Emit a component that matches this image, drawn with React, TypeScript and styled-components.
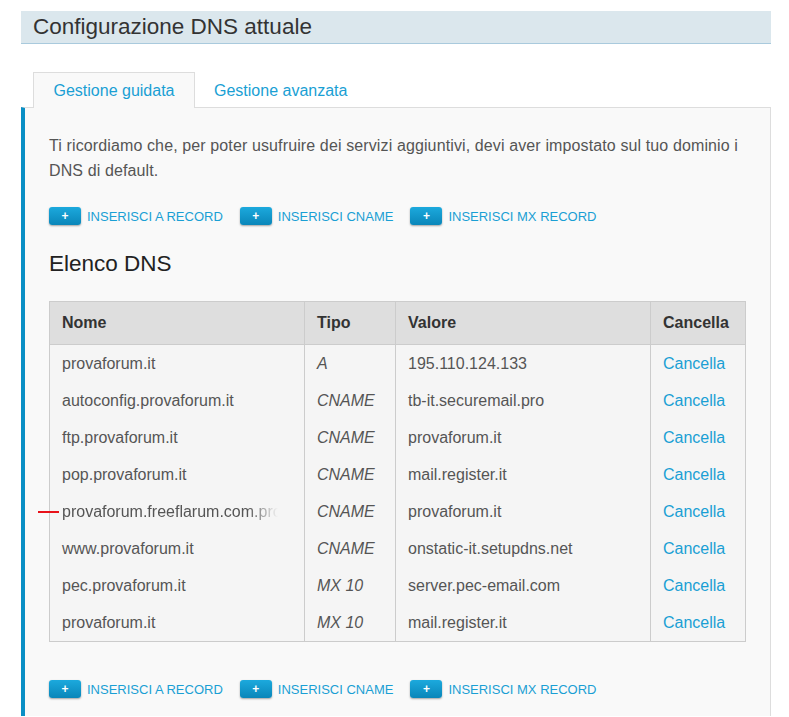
import React from "react";
import styled, { createGlobalStyle } from "styled-components";

const GlobalStyle = createGlobalStyle`
  body {
    margin: 0;
    background: #fff;
    font-family: "Liberation Sans", Arial, sans-serif;
  }
`;

const Page = styled.div`
  width: 750px;
  padding: 11px 0 0 21px;
`;

const TitleBar = styled.div`
  height: 32px;
  line-height: 32px;
  padding-left: 12px;
  background: #dbe7ed;
  border-bottom: 1px solid #a9cadd;
  font-size: 22.5px;
  color: #333;
`;

const Tabs = styled.div`
  display: flex;
  margin-top: 28px;
  padding-left: 12px;
  position: relative;
  z-index: 1;
`;

const Tab = styled.div<{ $active?: boolean }>`
  height: 35px;
  line-height: 35px;
  padding: 0 18px;
  width: ${(p) => (p.$active ? "124px" : "auto")};
  text-align: center;
  font-size: 16px;
  color: #1a9fd4;
  background: ${(p) => (p.$active ? "#f9f9f9" : "transparent")};
  border: 1px solid ${(p) => (p.$active ? "#ddd" : "transparent")};
  border-bottom: none;
  box-sizing: content-box;
  margin-bottom: -1px;
`;

const Panel = styled.div`
  background: #f9f9f9;
  border-left: 4px solid #0a8fc5;
  border-right: 1px solid #ddd;
  border-top: 1px solid #ddd;
  padding: 25px 24px 18px;
`;

const Intro = styled.p`
  margin: 0;
  font-size: 16px;
  line-height: 25px;
  letter-spacing: 0.12px;
  color: #555;
`;

const Actions = styled.div<{ $top: number }>`
  display: flex;
  gap: 17px;
  margin-top: ${(p) => p.$top}px;
`;

const Action = styled.div`
  display: flex;
  align-items: center;
  gap: 6px;
  font-size: 13px;
  color: #1a9fd4;
  text-transform: uppercase;
`;

const PlusButton = styled.span`
  width: 32px;
  height: 18px;
  border-radius: 3px;
  background: linear-gradient(#1ca9dd, #0a86b9);
  box-shadow: 0 1px 2px rgba(0, 0, 0, 0.35);
  color: #fff;
  font-weight: bold;
  font-size: 12px;
  line-height: 18px;
  text-align: center;
`;

const Heading = styled.h2`
  margin: 24px 0 22px;
  font-size: 22.5px;
  font-weight: normal;
  line-height: 30px;
  color: #222;
`;

const Table = styled.table`
  width: 696px;
  border-collapse: collapse;
  border: 1px solid #ccc;
  font-size: 16px;
  color: #555;
  table-layout: fixed;
`;

const Th = styled.th<{ $w: number }>`
  box-sizing: border-box;
  width: ${(p) => p.$w}px;
  height: 43px;
  padding: 0 12px;
  text-align: left;
  background: #dedede;
  color: #333;
  border-left: 1px solid #ccc;
  border-bottom: 1px solid #ccc;
`;

const Td = styled.td<{ $italic?: boolean }>`
  height: 37px;
  padding: 0 12px;
  background: #f5f5f5;
  border-left: 1px solid #ccc;
  font-style: ${(p) => (p.$italic ? "italic" : "normal")};
  white-space: nowrap;
  position: relative;
`;

const Faded = styled.span`
  display: inline-block;
  vertical-align: top;
  max-width: 216px;
  overflow: hidden;
  -webkit-mask-image: linear-gradient(to right, #000 86%, transparent);
  mask-image: linear-gradient(to right, #000 86%, transparent);
`;

const Marker = styled.span`
  position: absolute;
  left: -12px;
  top: 50%;
  width: 21px;
  height: 2px;
  margin-top: -1px;
  background: #e8121a;
`;

const DeleteLink = styled.a`
  color: #1a9fd4;
  text-decoration: none;
`;

const records = [
  { name: "provaforum.it", type: "A", value: "195.110.124.133" },
  { name: "autoconfig.provaforum.it", type: "CNAME", value: "tb-it.securemail.pro" },
  { name: "ftp.provaforum.it", type: "CNAME", value: "provaforum.it" },
  { name: "pop.provaforum.it", type: "CNAME", value: "mail.register.it" },
  { name: "provaforum.freeflarum.com.provaforum.it", type: "CNAME", value: "provaforum.it", marked: true },
  { name: "www.provaforum.it", type: "CNAME", value: "onstatic-it.setupdns.net" },
  { name: "pec.provaforum.it", type: "MX 10", value: "server.pec-email.com" },
  { name: "provaforum.it", type: "MX 10", value: "mail.register.it" },
];

const ActionRow = ({ top }: { top: number }) => (
  <Actions $top={top}>
    {["Inserisci A record", "Inserisci CNAME", "Inserisci MX record"].map((label) => (
      <Action key={label}>
        <PlusButton>+</PlusButton>
        {label}
      </Action>
    ))}
  </Actions>
);

export default function App() {
  return (
    <>
      <GlobalStyle />
      <Page>
        <TitleBar>Configurazione DNS attuale</TitleBar>
        <Tabs>
          <Tab $active>Gestione guidata</Tab>
          <Tab>Gestione avanzata</Tab>
        </Tabs>
        <Panel>
          <Intro>
            Ti ricordiamo che, per poter usufruire dei servizi aggiuntivi, devi aver impostato sul tuo dominio i
            DNS di default.
          </Intro>
          <ActionRow top={24} />
          <Heading>Elenco DNS</Heading>
          <Table>
            <thead>
              <tr>
                <Th $w={255}>Nome</Th>
                <Th $w={91}>Tipo</Th>
                <Th $w={255}>Valore</Th>
                <Th $w={95}>Cancella</Th>
              </tr>
            </thead>
            <tbody>
              {records.map((r, i) => (
                <tr key={i}>
                  <Td>
                    {r.marked && <Marker />}
                    {r.marked ? <Faded>{r.name}</Faded> : r.name}
                  </Td>
                  <Td $italic>{r.type}</Td>
                  <Td>{r.value}</Td>
                  <Td>
                    <DeleteLink href="#">Cancella</DeleteLink>
                  </Td>
                </tr>
              ))}
            </tbody>
          </Table>
          <ActionRow top={38} />
        </Panel>
      </Page>
    </>
  );
}
